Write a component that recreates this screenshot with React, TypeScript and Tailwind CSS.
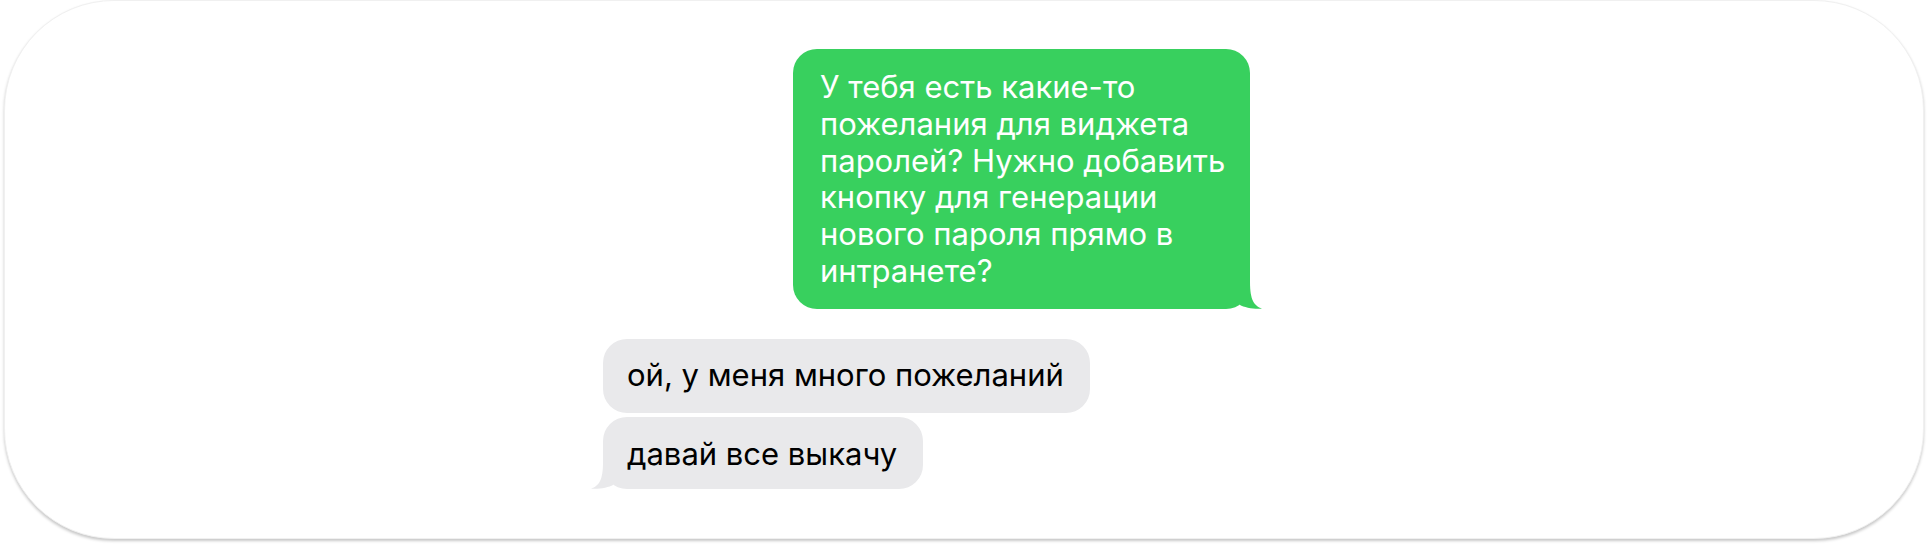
import React from "react";

const font = { fontFamily: "Inter, 'Noto Sans', sans-serif" };

function TailRight({ color }: { color: string }) {
  return (
    <svg
      className="absolute right-[-14px] bottom-[-1px]"
      width="34"
      height="28"
      viewBox="0 0 34 28"
    >
      <path
        d="M20 0 C20 18 24 24 32 26.5 C26 27.6 14 25.5 10 23 L10 0 Z"
        fill={color}
      />
    </svg>
  );
}

function TailLeft({ color }: { color: string }) {
  return (
    <svg
      className="absolute left-[-14px] bottom-[-1px]"
      width="34"
      height="28"
      viewBox="0 0 34 28"
    >
      <path
        d="M14 0 C14 18 10 24 2 26.5 C8 27.6 20 25.5 24 23 L24 0 Z"
        fill={color}
      />
    </svg>
  );
}

export default function App() {
  return (
    <div className="w-[1928px] h-[547px] bg-white px-[4px]" style={font}>
      <div className="h-[539px] rounded-[110px] bg-white border border-[#f0f0f0] shadow-[0_2px_3px_rgba(0,0,0,0.22)] flex flex-col items-start pt-[48px] pl-[598px]">
        {/* outgoing message */}
        <div className="relative ml-[190px] w-[457px] rounded-[24px] bg-[#38d05e] text-white px-[27px] pt-[20px] pb-[19px] text-[31px] leading-[36.8px] whitespace-nowrap">
          <p>У тебя есть какие-то</p>
          <p>пожелания для виджета</p>
          <p>паролей? Нужно добавить</p>
          <p>кнопку для генерации</p>
          <p>нового пароля прямо в</p>
          <p>интранете?</p>
          <TailRight color="#38d05e" />
        </div>

        {/* incoming messages */}
        <div className="mt-[30px] flex flex-col items-start gap-[4px]">
          <div className="w-[487px] h-[74px] rounded-[24px] bg-[#e9e9eb] text-black pl-[24px] pt-[18px] text-[31px] leading-[36.8px] whitespace-nowrap">
            ой, у меня много пожеланий
          </div>
          <div className="relative w-[320px] h-[72px] rounded-[24px] bg-[#e9e9eb] text-black pl-[24px] pt-[19px] text-[31px] leading-[36.8px] whitespace-nowrap">
            давай все выкачу
            <TailLeft color="#e9e9eb" />
          </div>
        </div>
      </div>
    </div>
  );
}
